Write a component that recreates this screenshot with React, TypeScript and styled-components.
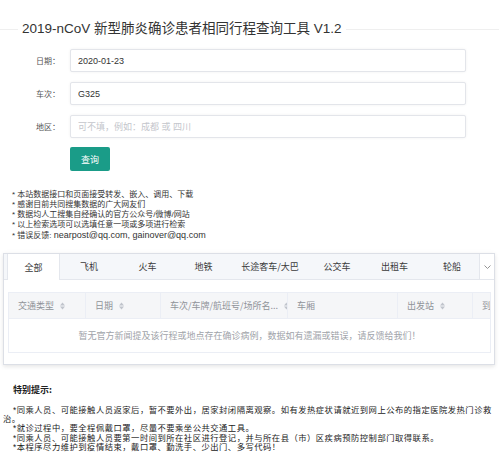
import React from "react";
import styled, { createGlobalStyle } from "styled-components";

const Global = createGlobalStyle`
  html, body { margin: 0; padding: 0; background: #fff; }
  body { font-family: "Liberation Sans", "Noto Sans CJK SC", sans-serif; color: #333; }
  * { box-sizing: border-box; }
`;

const Page = styled.div`
  width: 499px;
  padding-bottom: 12px;
`;

const Header = styled.div`
  display: flex;
  align-items: center;
  gap: 4px;
  padding-top: 20px;
  height: 38px;
`;

const Rule = styled.div<{ $w?: number }>`
  height: 1px;
  background: #efefef;
  ${(p) => (p.$w ? `width: ${p.$w}px;` : "flex: 1;")}
`;

const Title = styled.h1`
  margin: 0;
  font-size: 13.5px;
  line-height: 18px;
  font-weight: normal;
  color: #333;
  white-space: nowrap;
`;

const Form = styled.div`
  margin-top: 11px;
  display: grid;
  grid-template-columns: 60px 396px;
  column-gap: 10px;
  row-gap: 10px;
  align-items: center;
`;

const Label = styled.label`
  font-family: "Noto Sans CJK SC", sans-serif;
  font-size: 8px;
  color: #555;
  text-align: right;
`;

const Input = styled.input`
  height: 23px;
  width: 100%;
  border: 1px solid #e3e5ea;
  border-radius: 2px;
  box-shadow: 0 0 3px rgba(0, 0, 0, 0.06);
  padding: 0 7px;
  font-family: "Liberation Sans", "Noto Sans CJK SC", sans-serif;
  font-size: 9px;
  color: #333;
  outline: none;
  &::placeholder { color: #c4c6cc; }
`;

const Button = styled.button`
  grid-column: 2;
  justify-self: start;
  margin-top: -1px;
  width: 40px;
  height: 24px;
  border: none;
  border-radius: 2px;
  background: #1a9c88;
  color: #fff;
  font-family: "Noto Sans CJK SC", sans-serif;
  font-size: 9px;
  padding: 0;
`;

const Notes = styled.div`
  margin-top: 19px;
  padding-left: 12px;
  font-family: "Liberation Sans", "Noto Sans CJK SC", sans-serif;
  font-size: 8px;
  line-height: 10px;
  color: #333;
`;

const Latin = styled.span`
  font-size: 9px;
`;

const Card = styled.div`
  margin: 12px 4px 0 3px;
  border: 1px solid #dcdfe6;
  box-shadow: 0 2px 4px rgba(0, 0, 0, 0.08), 0 0 6px rgba(0, 0, 0, 0.03);
`;

const TabBar = styled.div`
  display: flex;
  height: 26px;
  background: #f5f7fa;
  border-bottom: 1px solid #e4e7ed;
  padding-left: 3px;
`;

const Tab = styled.div<{ $w: number; $active?: boolean }>`
  width: ${(p) => p.$w}px;
  display: flex;
  align-items: center;
  justify-content: center;
  font-family: "Noto Sans CJK SC", sans-serif;
  font-size: 9px;
  color: #3a3a3a;
  white-space: nowrap;
  ${(p) =>
    p.$active
      ? `background: #fff; border-left: 1px solid #e4e7ed; border-right: 1px solid #e4e7ed; margin-bottom: -1px;`
      : ""}
`;

const More = styled.div`
  flex: 1;
  display: flex;
  align-items: center;
  justify-content: center;
  background: #fff;
  border-left: 1px solid #e4e7ed;
`;

const Content = styled.div`
  padding: 12px 3px 11px 4px;
`;

const Table = styled.div`
  border: 1px solid #ebeef5;
  overflow: hidden;
`;

const HeadRow = styled.div`
  display: grid;
  grid-template-columns: 77px 75px 127px 110px 75px 1fr;
  height: 26px;
  background: #f5f6f8;
  border-bottom: 1px solid #ebeef5;
`;

const HeadCell = styled.div<{ $last?: boolean }>`
  display: flex;
  align-items: center;
  padding-left: 9px;
  font-family: "Noto Sans CJK SC", sans-serif;
  font-size: 9px;
  color: #909399;
  white-space: nowrap;
  overflow: hidden;
  ${(p) => (p.$last ? "" : "border-right: 1px solid #ebeef5;")}
`;

const Empty = styled.div`
  height: 33px;
  display: flex;
  align-items: center;
  justify-content: center;
  font-family: "Noto Sans CJK SC", sans-serif;
  font-size: 9px;
  color: #a0a3a9;
`;

const Special = styled.div`
  margin-top: 19px;
  padding: 0 4px 0 3px;
`;

const SpecialTitle = styled.div`
  padding-left: 10px;
  font-family: "Noto Sans CJK SC", sans-serif;
  font-size: 9px;
  line-height: 12px;
  font-weight: bold;
  color: #222;
`;

const SpecialList = styled.div`
  margin-top: 10px;
`;

const SpecialItem = styled.div`
  text-indent: 10px;
  font-family: "Liberation Sans", "Noto Sans CJK SC", sans-serif;
  font-size: 8.3px;
  letter-spacing: 0.5px;
  line-height: 9.2px;
  color: #222;
`;

const Sort = () => (
  <svg width="5" height="8" viewBox="0 0 5 8" style={{ marginLeft: 6, flexShrink: 0 }}>
    <polygon points="0,3.4 2.5,0.6 5,3.4" fill="#c0c4cc" />
    <polygon points="0,4.6 5,4.6 2.5,7.4" fill="#c0c4cc" />
  </svg>
);

const tabs: [string, number][] = [
  ["全部", 53],
  ["飞机", 58],
  ["火车", 59],
  ["地铁", 53],
  ["长途客车/大巴", 80],
  ["公交车", 54],
  ["出租车", 61],
  ["轮船", 54],
];

const cols: [string, boolean][] = [
  ["交通类型", true],
  ["日期", true],
  ["车次/车牌/航班号/场所名...", true],
  ["车厢", false],
  ["出发站", true],
  ["到", false],
];

export default function App() {
  return (
    <Page>
      <Global />
      <Header>
        <Rule $w={18} />
        <Title>2019-nCoV 新型肺炎确诊患者相同行程查询工具 V1.2</Title>
        <Rule />
      </Header>

      <Form>
        <Label>日期：</Label>
        <Input defaultValue="2020-01-23" />
        <Label>车次：</Label>
        <Input defaultValue="G325" />
        <Label>地区：</Label>
        <Input placeholder="可不填，例如：成都 或 四川" />
        <Button>查询</Button>
      </Form>

      <Notes>
        <div>* 本站数据接口和页面接受转发、嵌入、调用、下载</div>
        <div>* 感谢目前共同搜集数据的广大网友们</div>
        <div>* 数据均人工搜集自经确认的官方公众号/微博/网站</div>
        <div>* 以上检索选项可以选填任意一项或多项进行检索</div>
        <div>
          * 错误反馈: <Latin>nearpost@qq.com, gainover@qq.com</Latin>
        </div>
      </Notes>

      <Card>
        <TabBar>
          {tabs.map(([t, w], i) => (
            <Tab key={t} $w={w} $active={i === 0}>
              {t}
            </Tab>
          ))}
          <More>
            <svg width="7" height="4" viewBox="0 0 7 4">
              <polyline points="0.5,0.5 3.5,3.5 6.5,0.5" fill="none" stroke="#888" strokeWidth="0.9" />
            </svg>
          </More>
        </TabBar>
        <Content>
          <Table>
            <HeadRow>
              {cols.map(([c, s], i) => (
                <HeadCell key={c} $last={i === cols.length - 1}>
                  {c}
                  {s && <Sort />}
                </HeadCell>
              ))}
            </HeadRow>
            <Empty>暂无官方新闻提及该行程或地点存在确诊病例，数据如有遗漏或错误，请反馈给我们！</Empty>
          </Table>
        </Content>
      </Card>

      <Special>
        <SpecialTitle>特别提示:</SpecialTitle>
        <SpecialList>
          <SpecialItem>*同乘人员、可能接触人员返家后，暂不要外出，居家封闭隔离观察。如有发热症状请就近到网上公布的指定医院发热门诊救治。</SpecialItem>
          <SpecialItem>*就诊过程中，要全程佩戴口罩，尽量不要乘坐公共交通工具。</SpecialItem>
          <SpecialItem>*同乘人员、可能接触人员要第一时间到所在社区进行登记，并与所在县（市）区疾病预防控制部门取得联系。</SpecialItem>
          <SpecialItem>*本程序尽力维护到疫情结束，戴口罩、勤洗手、少出门、多写代码！</SpecialItem>
        </SpecialList>
      </Special>
    </Page>
  );
}
